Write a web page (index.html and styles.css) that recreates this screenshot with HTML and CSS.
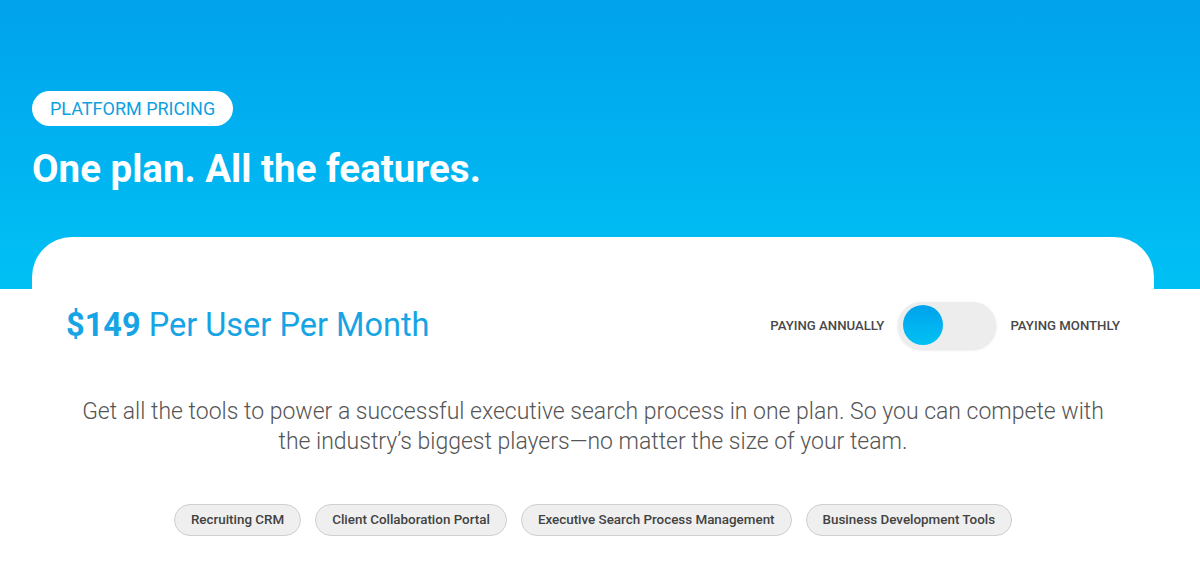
FILE: index.html
```html
<!DOCTYPE html>
<html lang="en">
<head>
    <meta charset="UTF-8">
    <meta name="viewport" content="width=device-width, initial-scale=1.0">
    <title>Platform Pricing</title>
    <link rel="stylesheet" href="styles.css">
</head>
<body>
    <header class="hero">
        <span class="badge">PLATFORM PRICING</span>
        <h1>One plan. All the features.</h1>
    </header>

    <section class="card">
        <div class="card-top">
            <h2 class="price"><strong>$149</strong> Per User Per Month</h2>
            <div class="billing">
                <span class="billing-label">PAYING ANNUALLY</span>
                <button class="toggle" type="button" aria-label="Switch billing"><span class="knob"></span></button>
                <span class="billing-label">PAYING MONTHLY</span>
            </div>
        </div>

        <p class="intro">Get all the tools to power a successful executive search process in one plan. So you can compete with the industry’s biggest players—no matter the size of your team.</p>

        <ul class="tags">
            <li>Recruiting CRM</li>
            <li>Client Collaboration Portal</li>
            <li>Executive Search Process Management</li>
            <li>Business Development Tools</li>
        </ul>
    </section>
</body>
</html>
```

FILE: styles.css
```css
body {
    margin: 0;
    font-family: Roboto, "Liberation Sans", Arial, sans-serif;
    background: #fff linear-gradient(180deg, #00a2ec 0%, #00c1f4 100%) no-repeat;
    background-size: 100% 289px;
}
.hero {
    padding: 91px 32px 0;
}
.badge {
    display: inline-block;
    background: #fff;
    color: #0fa0e2;
    font-size: 18px;
    line-height: 35px;
    padding: 0 18px;
    border-radius: 18px;
}
h1 {
    margin: 22px 0 0;
    color: #fff;
    font-size: 38.5px;
    font-weight: 700;
    line-height: 42px;
}
.card {
    margin: 47px 46px 0 32px;
    background: #fff;
    border-radius: 40px 40px 0 0;
    padding: 64px 34px 40px;
}
.card-top {
    display: flex;
    align-items: center;
    justify-content: space-between;
}
.price {
    margin: 0;
    color: #16a4e5;
    font-size: 32.5px;
    font-weight: 400;
    line-height: 48px;
}
.price strong {
    font-weight: 700;
}
.billing {
    display: flex;
    align-items: center;
    gap: 14px;
}
.billing-label {
    color: #484848;
    font-size: 13.2px;
    font-weight: 500;
}
.toggle {
    width: 98px;
    height: 47px;
    border: none;
    border-radius: 24px;
    background: #ededed;
    box-shadow: 0 1px 3px rgba(0, 0, 0, 0.12);
    padding: 4px 5px;
    display: flex;
    align-items: center;
    cursor: pointer;
}
.knob {
    width: 40px;
    height: 40px;
    border-radius: 50%;
    background: linear-gradient(180deg, #00a2ec, #00c1f4);
}
.intro {
    margin: 48px 0 0;
    text-align: center;
    color: #555;
    font-size: 23px;
    font-weight: 300;
    line-height: 30px;
}
.tags {
    list-style: none;
    margin: 47px 0 0;
    padding: 0;
    display: flex;
    justify-content: center;
    gap: 14px;
}
.tags li {
    border: 1px solid #cfcfcf;
    background: #efefef;
    color: #424242;
    font-size: 13.4px;
    font-weight: 500;
    line-height: 30px;
    padding: 0 16px;
    border-radius: 16px;
}
```
